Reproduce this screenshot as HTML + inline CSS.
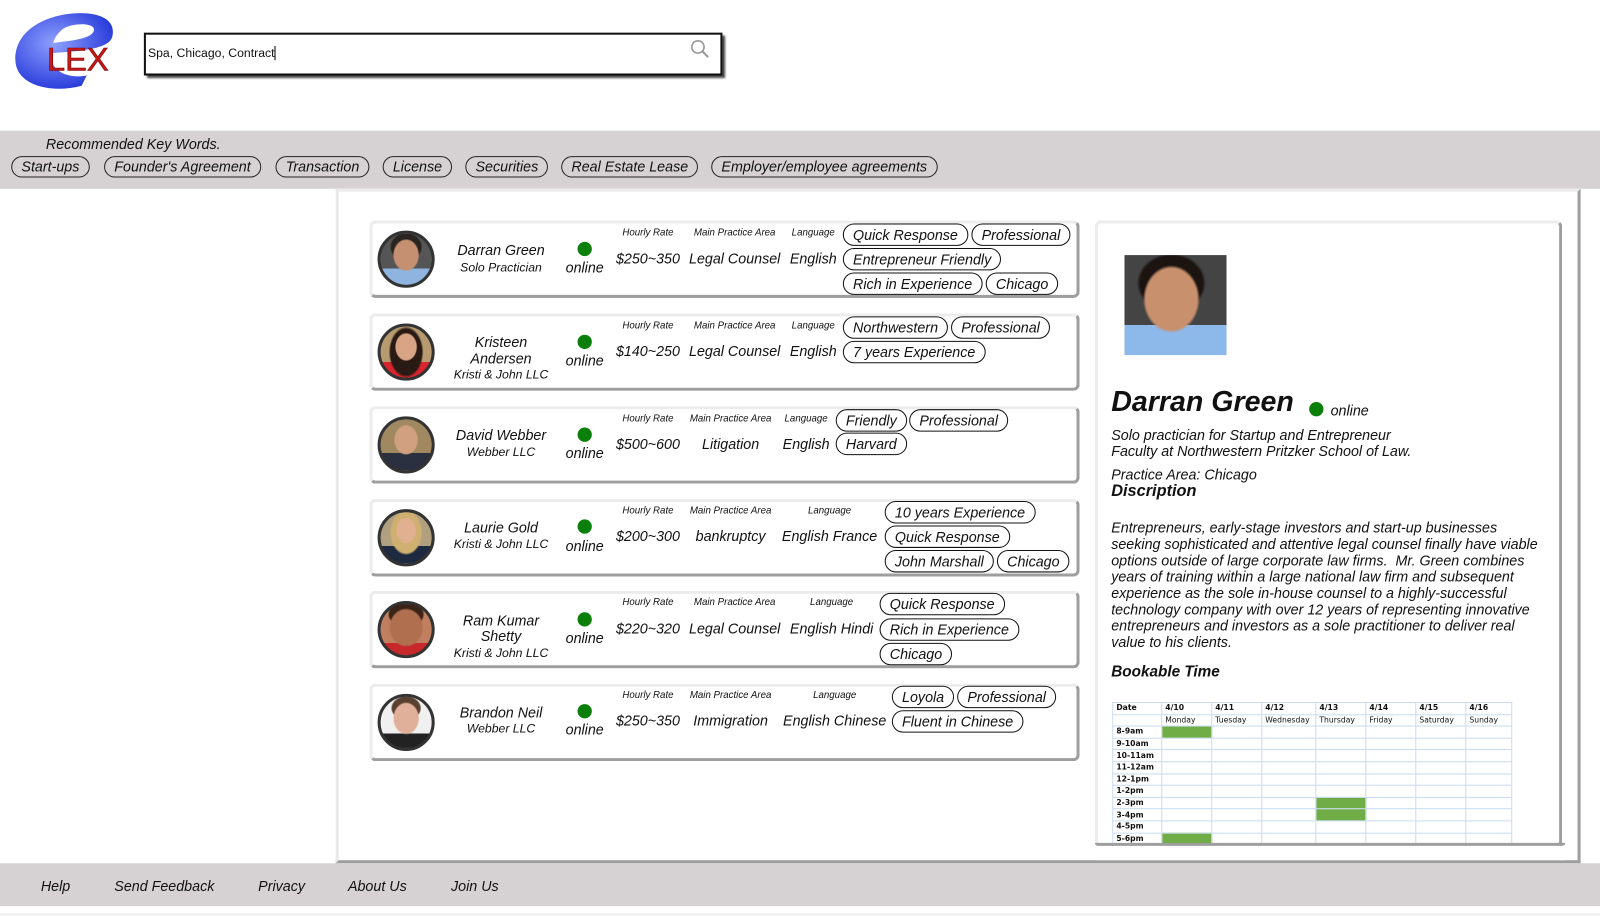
<!DOCTYPE html>
<html><head><meta charset="utf-8"><style>
*{margin:0;padding:0;box-sizing:border-box}
body{width:1600px;height:916px;position:relative;background:#fff;font-family:"Liberation Sans",Arial,sans-serif;font-style:italic;color:#111;overflow:hidden}
#w{position:absolute;left:0;top:0;width:1568px;height:898px;transform:scale(1.0204);transform-origin:0 0}
.a{position:absolute;white-space:nowrap}
.c{position:absolute;width:200px;text-align:center;white-space:nowrap}
.band{position:absolute;left:0;width:1600px;background:#d6d2d3}
.kw{position:absolute;top:153px;height:21px;border:1px solid #222;border-radius:11px;font-size:14px;line-height:19px;padding:0 9px}
.card{position:absolute;left:362px;width:696px;height:76px;border-top:3px solid #ececec;border-left:3px solid #ececec;border-right:3px solid #9e9e9e;border-bottom:3px solid #9e9e9e;border-radius:6px;background:#fff}
.av{position:absolute;width:56px;height:56px;border-radius:50%;border:3px solid #333;overflow:hidden}
.dot{position:absolute;width:14px;height:14px;border-radius:50%;background:#0a7f0a}
.lab{font-size:9.5px}
.val{font-size:14px}
.tag{position:absolute;height:22px;border:1px solid #111;border-radius:11px;font-size:14px;line-height:20px;padding:0 9px;white-space:nowrap;background:#fff}
table{border-collapse:collapse;font-family:"DejaVu Sans",sans-serif;font-style:normal;font-size:7.5px}
td{border:1px solid #c9dcf0;height:11.6px;padding:0 3px;line-height:10px}
</style></head><body><div id="w">
<svg class="a" style="left:10px;top:8px" width="115" height="85" viewBox="0 0 115 85">
<defs><radialGradient id="g" cx="40%" cy="40%" r="70%"><stop offset="0" stop-color="#8fa0ff"/><stop offset="1" stop-color="#1c2fd6"/></radialGradient></defs>
<path d="M55 6 C80 2 105 8 100 28 C97 40 70 42 40 44 C38 60 55 70 75 66 L70 76 C40 84 5 76 5 50 C5 25 28 10 55 6 Z M42 34 C60 32 80 30 82 22 C84 14 62 14 52 20 C47 24 44 28 42 34 Z" fill="url(#g)"/>
<text x="36" y="61" font-family="Liberation Sans" font-size="32" fill="#c81818" font-style="normal" stroke="#700" stroke-width="0.6">LEX</text>
</svg>
<div class="a" style="left:141px;top:32px;width:567px;height:42px;border:2px solid #111;box-shadow:3px 3px 2px #444;background:#fff"></div>
<div class="a" style="left:145px;top:45px;font-size:12px;font-style:normal">Spa, Chicago, Contract<span style="border-left:1px solid #000"> </span></div>
<svg class="a" style="left:676px;top:38px" width="20" height="20" viewBox="0 0 20 20"><circle cx="8" cy="8" r="6" fill="none" stroke="#999" stroke-width="1.6"/><line x1="12.5" y1="12.5" x2="18" y2="18" stroke="#999" stroke-width="2"/></svg>

<div class="band" style="top:128px;height:57px"></div>
<div class="a" style="left:45px;top:133px;font-size:14px">Recommended Key Words.</div>
<div class="kw" style="left:11px">Start-ups</div>
<div class="kw" style="left:102px">Founder's Agreement</div>
<div class="kw" style="left:270px">Transaction</div>
<div class="kw" style="left:375px">License</div>
<div class="kw" style="left:456px">Securities</div>
<div class="kw" style="left:550px">Real Estate Lease</div>
<div class="kw" style="left:697px">Employer/employee agreements</div>

<div class="a" style="left:329px;top:185px;width:1220px;height:661px;border-left:3px solid #e8e8e8;border-right:3px solid #9e9e9e;border-bottom:3px solid #9e9e9e;border-top:3px solid #ececec"></div>

<div class="card" style="top:216px"></div>
<div class="av" style="left:370px;top:226px;background:radial-gradient(ellipse 26% 32% at 50% 42%,#c58f72 0 90%,transparent 100%),radial-gradient(ellipse 32% 28% at 50% 26%,#2a2420 0 90%,transparent 100%),linear-gradient(#555 0 68%,#8fb4e0 68%)"></div>
<div class="c val" style="left:391px;top:237px">Darran Green</div>
<div class="c" style="left:391px;top:255px;font-size:12px">Solo Practician</div>
<div class="dot" style="left:566px;top:237px"></div><div class="c val" style="left:473px;top:254px">online</div>
<div class="c lab" style="left:535px;top:223px">Hourly Rate</div><div class="c val" style="left:535px;top:245px">$250~350</div>
<div class="c lab" style="left:620px;top:223px">Main Practice Area</div><div class="c val" style="left:620px;top:245px">Legal Counsel</div>
<div class="c lab" style="left:697px;top:223px">Language</div><div class="c val" style="left:697px;top:245px">English</div>
<div class="tag" style="left:826px;top:219px">Quick Response</div><div class="tag" style="left:952px;top:219px">Professional</div>
<div class="tag" style="left:826px;top:243px">Entrepreneur Friendly</div>
<div class="tag" style="left:826px;top:267px">Rich in Experience</div><div class="tag" style="left:966px;top:267px">Chicago</div>

<div class="card" style="top:307px"></div>
<div class="av" style="left:370px;top:317px;background:radial-gradient(ellipse 22% 28% at 50% 40%,#d9a486 0 90%,transparent 100%),radial-gradient(ellipse 34% 50% at 50% 50%,#2a1a14 0 90%,transparent 100%),linear-gradient(#b89a70 0 70%,#d8242e 70%)"></div>
<div class="c val" style="left:391px;top:327px">Kristeen</div>
<div class="c val" style="left:391px;top:343px">Andersen</div>
<div class="c" style="left:391px;top:360px;font-size:12px">Kristi &amp; John LLC</div>
<div class="dot" style="left:566px;top:328px"></div><div class="c val" style="left:473px;top:345px">online</div>
<div class="c lab" style="left:535px;top:314px">Hourly Rate</div><div class="c val" style="left:535px;top:336px">$140~250</div>
<div class="c lab" style="left:620px;top:314px">Main Practice Area</div><div class="c val" style="left:620px;top:336px">Legal Counsel</div>
<div class="c lab" style="left:697px;top:314px">Language</div><div class="c val" style="left:697px;top:336px">English</div>
<div class="tag" style="left:826px;top:310px">Northwestern</div><div class="tag" style="left:932px;top:310px">Professional</div>
<div class="tag" style="left:826px;top:334px">7 years Experience</div>

<div class="card" style="top:398px"></div>
<div class="av" style="left:370px;top:408px;background:radial-gradient(ellipse 24% 30% at 50% 40%,#d0a080 0 90%,transparent 100%),linear-gradient(#a08860 0 66%,#2a3040 66%)"></div>
<div class="c val" style="left:391px;top:418px">David Webber</div>
<div class="c" style="left:391px;top:436px;font-size:12px">Webber LLC</div>
<div class="dot" style="left:566px;top:419px"></div><div class="c val" style="left:473px;top:436px">online</div>
<div class="c lab" style="left:535px;top:405px">Hourly Rate</div><div class="c val" style="left:535px;top:427px">$500~600</div>
<div class="c lab" style="left:616px;top:405px">Main Practice Area</div><div class="c val" style="left:616px;top:427px">Litigation</div>
<div class="c lab" style="left:690px;top:405px">Language</div><div class="c val" style="left:690px;top:427px">English</div>
<div class="tag" style="left:819px;top:401px">Friendly</div><div class="tag" style="left:891px;top:401px">Professional</div>
<div class="tag" style="left:819px;top:424px">Harvard</div>

<div class="card" style="top:489px"></div>
<div class="av" style="left:370px;top:499px;background:radial-gradient(ellipse 20% 26% at 50% 36%,#e0b090 0 90%,transparent 100%),radial-gradient(ellipse 32% 44% at 50% 40%,#d0b070 0 90%,transparent 100%),linear-gradient(#b0a080 0 66%,#1e2a40 66%)"></div>
<div class="c val" style="left:391px;top:509px">Laurie Gold</div>
<div class="c" style="left:391px;top:526px;font-size:12px">Kristi &amp; John LLC</div>
<div class="dot" style="left:566px;top:509px"></div><div class="c val" style="left:473px;top:527px">online</div>
<div class="c lab" style="left:535px;top:495px">Hourly Rate</div><div class="c val" style="left:535px;top:517px">$200~300</div>
<div class="c lab" style="left:616px;top:495px">Main Practice Area</div><div class="c val" style="left:616px;top:517px">bankruptcy</div>
<div class="c lab" style="left:713px;top:495px">Language</div><div class="c val" style="left:713px;top:517px">English France</div>
<div class="tag" style="left:867px;top:491px">10 years Experience</div>
<div class="tag" style="left:867px;top:515px">Quick Response</div>
<div class="tag" style="left:867px;top:539px">John Marshall</div><div class="tag" style="left:977px;top:539px">Chicago</div>

<div class="card" style="top:579px"></div>
<div class="av" style="left:370px;top:589px;background:radial-gradient(ellipse 34% 38% at 50% 46%,#b07050 0 90%,transparent 100%),radial-gradient(ellipse 36% 26% at 50% 20%,#3a2418 0 90%,transparent 100%),linear-gradient(#c08060 0 76%,#c8282a 76%)"></div>
<div class="c val" style="left:391px;top:600px">Ram Kumar</div>
<div class="c val" style="left:391px;top:615px">Shetty</div>
<div class="c" style="left:391px;top:633px;font-size:12px">Kristi &amp; John LLC</div>
<div class="dot" style="left:566px;top:600px"></div><div class="c val" style="left:473px;top:617px">online</div>
<div class="c lab" style="left:535px;top:585px">Hourly Rate</div><div class="c val" style="left:535px;top:608px">$220~320</div>
<div class="c lab" style="left:620px;top:585px">Main Practice Area</div><div class="c val" style="left:620px;top:608px">Legal Counsel</div>
<div class="c lab" style="left:715px;top:585px">Language</div><div class="c val" style="left:715px;top:608px">English Hindi</div>
<div class="tag" style="left:862px;top:581px">Quick Response</div>
<div class="tag" style="left:862px;top:606px">Rich in Experience</div>
<div class="tag" style="left:862px;top:630px">Chicago</div>

<div class="card" style="top:670px"></div>
<div class="av" style="left:370px;top:680px;background:radial-gradient(ellipse 26% 32% at 50% 42%,#e0b09a 0 90%,transparent 100%),radial-gradient(ellipse 30% 24% at 50% 22%,#5a4030 0 90%,transparent 100%),linear-gradient(#f0f0f0 0 72%,#222 72%)"></div>
<div class="c val" style="left:391px;top:690px">Brandon Neil</div>
<div class="c" style="left:391px;top:707px;font-size:12px">Webber LLC</div>
<div class="dot" style="left:566px;top:690px"></div><div class="c val" style="left:473px;top:707px">online</div>
<div class="c lab" style="left:535px;top:676px">Hourly Rate</div><div class="c val" style="left:535px;top:698px">$250~350</div>
<div class="c lab" style="left:616px;top:676px">Main Practice Area</div><div class="c val" style="left:616px;top:698px">Immigration</div>
<div class="c lab" style="left:718px;top:676px">Language</div><div class="c val" style="left:718px;top:698px">English Chinese</div>
<div class="tag" style="left:874px;top:672px">Loyola</div><div class="tag" style="left:938px;top:672px">Professional</div>
<div class="tag" style="left:874px;top:696px">Fluent in Chinese</div>

<div class="a" style="left:1073px;top:216px;width:458px;height:614px;border-top:3px solid #ececec;border-left:3px solid #ececec;border-right:3px solid #9e9e9e;border-bottom:3px solid #9e9e9e;border-radius:6px"></div>
<div class="a" style="left:1102px;top:250px;width:100px;height:98px;background:radial-gradient(ellipse 28% 34% at 46% 44%,#c8906c 0 90%,transparent 100%),radial-gradient(ellipse 34% 30% at 46% 28%,#1c1410 0 90%,transparent 100%),linear-gradient(#444 0 70%,#8db8ea 70%)"></div>
<div class="a" style="left:1089px;top:378px;font-size:28px;font-weight:bold">Darran Green</div>
<div class="dot" style="left:1283px;top:394px"></div>
<div class="a" style="left:1304px;top:394px;font-size:14px">online</div>
<div class="a" style="left:1089px;top:418px;font-size:14px;line-height:16px">Solo practician for Startup and Entrepreneur<br>Faculty at Northwestern Pritzker School of Law.</div>
<div class="a" style="left:1089px;top:457px;font-size:14px">Practice Area: Chicago</div>
<div class="a" style="left:1089px;top:473px;font-size:16px;font-weight:bold">Discription</div>
<div class="a" style="left:1089px;top:509px;font-size:14px;line-height:16px">Entrepreneurs, early-stage investors and start-up businesses<br>seeking sophisticated and attentive legal counsel finally have viable<br>options outside of large corporate law firms.&nbsp; Mr. Green combines<br>years of training within a large national law firm and subsequent<br>experience as the sole in-house counsel to a highly-successful<br>technology company with over 12 years of representing innovative<br>entrepreneurs and investors as a sole practitioner to deliver real<br>value to his clients.</div>
<div class="a" style="left:1089px;top:650px;font-size:15px;font-weight:bold">Bookable Time</div>
<table class="a" style="left:1090px;top:688px;width:392px">
<tr style="font-weight:bold"><td style="width:48px">Date</td><td style="width:49px">4/10</td><td style="width:49px">4/11</td><td style="width:53px">4/12</td><td style="width:49px">4/13</td><td style="width:49px">4/14</td><td style="width:49px">4/15</td><td>4/16</td></tr>
<tr><td></td><td>Monday</td><td>Tuesday</td><td>Wednesday</td><td>Thursday</td><td>Friday</td><td>Saturday</td><td>Sunday</td></tr>
<tr><td><b>8-9am</b></td><td style="background:#70ad47"></td><td></td><td></td><td></td><td></td><td></td><td></td></tr>
<tr><td><b>9-10am</b></td><td></td><td></td><td></td><td></td><td></td><td></td><td></td></tr>
<tr><td><b>10-11am</b></td><td></td><td></td><td></td><td></td><td></td><td></td><td></td></tr>
<tr><td><b>11-12am</b></td><td></td><td></td><td></td><td></td><td></td><td></td><td></td></tr>
<tr><td><b>12-1pm</b></td><td></td><td></td><td></td><td></td><td></td><td></td><td></td></tr>
<tr><td><b>1-2pm</b></td><td></td><td></td><td></td><td></td><td></td><td></td><td></td></tr>
<tr><td><b>2-3pm</b></td><td></td><td></td><td></td><td style="background:#70ad47"></td><td></td><td></td><td></td></tr>
<tr><td><b>3-4pm</b></td><td></td><td></td><td></td><td style="background:#70ad47"></td><td></td><td></td><td></td></tr>
<tr><td><b>4-5pm</b></td><td></td><td></td><td></td><td></td><td></td><td></td><td></td></tr>
<tr><td><b>5-6pm</b></td><td style="background:#70ad47"></td><td></td><td></td><td></td><td></td><td></td><td></td></tr>
</table>
<div class="a" style="left:1074px;top:827px;width:460px;height:16px;background:#fff"></div>
<div class="a" style="left:1073px;top:826px;width:461px;height:3px;background:#9e9e9e;border-radius:0 0 4px 4px"></div>

<div class="band" style="top:846px;height:42px"></div>
<div class="a" style="left:40px;top:860px;font-size:14px">Help</div>
<div class="a" style="left:112px;top:860px;font-size:14px">Send Feedback</div>
<div class="a" style="left:253px;top:860px;font-size:14px">Privacy</div>
<div class="a" style="left:341px;top:860px;font-size:14px">About Us</div>
<div class="a" style="left:442px;top:860px;font-size:14px">Join Us</div>
<div class="a" style="left:0;top:895px;width:1600px;height:2px;background:#eee"></div>
</div></body></html>
